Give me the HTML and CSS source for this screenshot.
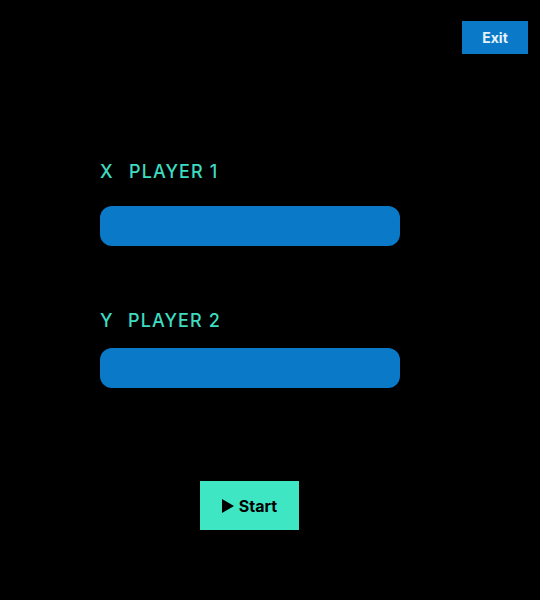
FILE: index.html
```html
<!DOCTYPE html>
<html>
<head>
<meta charset="utf-8">
<link rel="stylesheet" href="styles.css">
</head>
<body>
<div class="page">
  <header class="topbar">
    <button class="exit">Exit</button>
  </header>
  <main class="form">
    <div class="field">
      <label class="label"><span class="mark">X</span><span>PLAYER 1</span></label>
      <input class="input" type="text">
    </div>
    <div class="field field2">
      <label class="label"><span class="mark mark2">Y</span><span>PLAYER 2</span></label>
      <input class="input input2" type="text">
    </div>
    <div class="actions">
      <button class="start"><svg class="play" viewBox="0 0 12 14" width="12" height="14"><path d="M0 0L12 7L0 14Z" fill="#000"/></svg>Start</button>
    </div>
  </main>
</div>
</body>
</html>
```
FILE: styles.css
```css
html, body {
  margin: 0;
  padding: 0;
  background: #000;
  font-family: Inter, "Noto Sans", sans-serif;
}
.page {
  width: 540px;
  height: 600px;
  display: flex;
  flex-direction: column;
}
.topbar {
  display: flex;
  justify-content: flex-end;
  padding: 21px 12px 0 0;
}
.exit {
  width: 66px;
  height: 33px;
  background: #0a7ac8;
  color: #e8f2fa;
  border: none;
  font-family: Inter, sans-serif;
  font-weight: 700;
  font-size: 14px;
  padding: 0;
}
.form {
  padding: 107px 0 0 100px;
  display: flex;
  flex-direction: column;
}
.field {
  display: flex;
  flex-direction: column;
}
.field2 {
  margin-top: 64px;
}
.label {
  display: flex;
  gap: 15px;
  color: #3ddcc0;
  font-size: 18px;
  font-weight: 500;
  letter-spacing: 1.1px;
  line-height: 22px;
  height: 22px;
}
.mark {
  width: 14px;
}
.mark2 {
  width: 13px;
}
.input {
  margin-top: 23px;
  width: 300px;
  height: 40px;
  box-sizing: border-box;
  border: none;
  border-radius: 12px;
  background: #0a7ac8;
  outline: none;
}
.input2 {
  margin-top: 16px;
}
.actions {
  margin-top: 93px;
  padding-left: 100px;
  display: flex;
}
.start {
  width: 99px;
  height: 49px;
  background: #3ee6c4;
  border: none;
  display: flex;
  align-items: center;
  justify-content: center;
  gap: 5px;
  font-family: Inter, sans-serif;
  font-weight: 700;
  font-size: 16px;
  color: #000;
  padding: 0;
}
.play {
  display: block;
}
```
